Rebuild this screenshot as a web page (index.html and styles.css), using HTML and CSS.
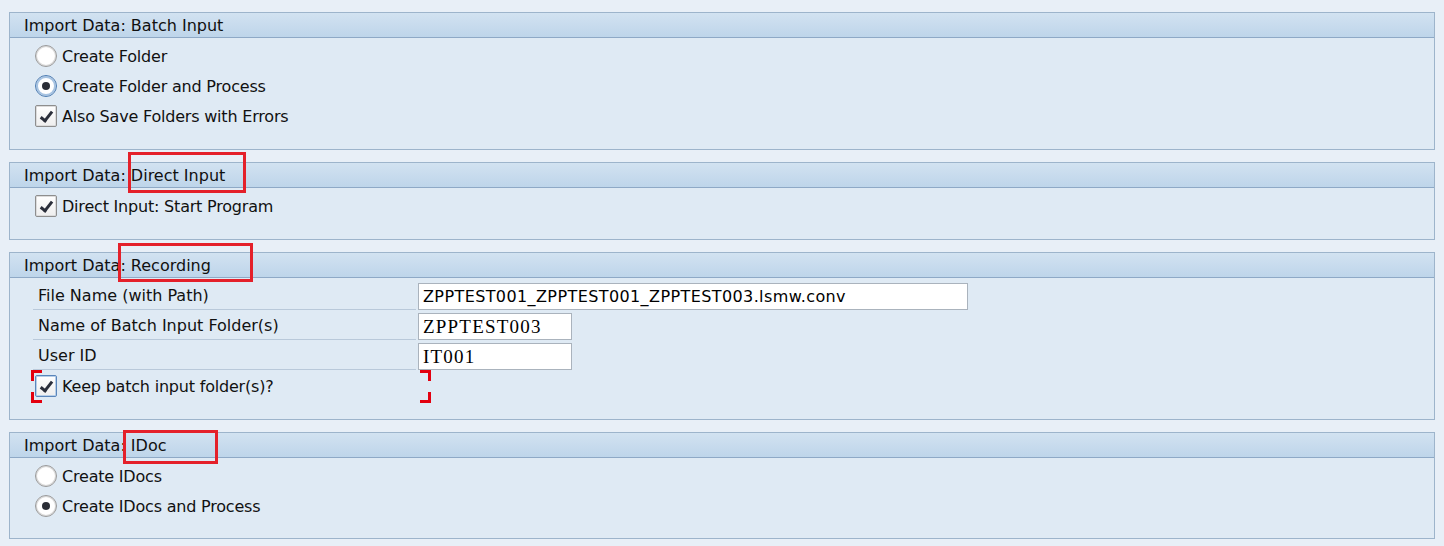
FILE: index.html
```html
<!DOCTYPE html>
<html lang="en">

<head>
    <meta charset="UTF-8">
    <title>Import Data</title>
    <link rel="stylesheet" href="styles.css">
</head>

<body>
    <div class="main">
        <div class="group">
            <div class="group-title">Import Data: Batch Input</div>
            <div class="group-body">
                <div class="row"><span class="radio"></span><span>Create Folder</span></div>
                <div class="row"><span class="radio radio-on focus"></span><span>Create Folder and Process</span></div>
                <div class="row"><span class="check"></span><span>Also Save Folders with Errors</span></div>
            </div>
        </div>

        <div class="group">
            <div class="group-title">Import Data: Direct Input</div>
            <div class="group-body">
                <div class="row"><span class="check"></span><span>Direct Input: Start Program</span></div>
            </div>
            <span class="mark mark-direct"></span>
        </div>

        <div class="group">
            <div class="group-title">Import Data: Recording</div>
            <div class="group-body">
                <div class="field">
                    <label>File Name (with Path)</label>
                    <div class="input input-long">ZPPTEST001_ZPPTEST001_ZPPTEST003.lsmw.conv</div>
                </div>
                <div class="field">
                    <label>Name of Batch Input Folder(s)</label>
                    <div class="input input-short serif">ZPPTEST003</div>
                </div>
                <div class="field">
                    <label>User ID</label>
                    <div class="input input-short serif">IT001</div>
                </div>
                <div class="row">
                    <span class="check focus"></span><span>Keep batch input folder(s)?</span>
                    <span class="corner corner-tl"></span>
                    <span class="corner corner-bl"></span>
                    <span class="corner corner-tr"></span>
                    <span class="corner corner-br"></span>
                </div>
            </div>
            <span class="mark mark-recording"></span>
        </div>

        <div class="group">
            <div class="group-title">Import Data: IDoc</div>
            <div class="group-body">
                <div class="row"><span class="radio"></span><span>Create IDocs</span></div>
                <div class="row"><span class="radio radio-on"></span><span>Create IDocs and Process</span></div>
            </div>
            <span class="mark mark-idoc"></span>
        </div>
    </div>
</body>

</html>
```

FILE: styles.css
```css
body {
    margin: 0;
    background-color: #e8eff7;
    font-family: 'DejaVu Sans', Verdana, sans-serif;
    font-size: 16px;
    color: #111;
}
.main {
    padding: 12px 9px 8px 9px;
}
.group {
    position: relative;
    border: 1px solid #9db4cb;
    background-color: #dfeaf4;
    margin-bottom: 12px;
}
.group-title {
    height: 24px;
    line-height: 25px;
    padding-left: 14px;
    background: linear-gradient(#d2e2f1, #bed5ea);
    border-bottom: 1px solid #8ea9c6;
    color: #101010;
}
.group-body {
    padding: 3px 0 18px 25px;
}
.group:last-child .group-body {
    padding-bottom: 17px;
}
.row {
    position: relative;
    height: 30px;
    display: flex;
    align-items: center;
}
.row span:nth-child(2) {
    margin-left: 5px;
    letter-spacing: -0.2px;
}

/* radio buttons */
.radio {
    position: relative;
    width: 20px;
    height: 20px;
    border-radius: 50%;
    border: 1px solid #9a9a9a;
    background: radial-gradient(circle, #ffffff 55%, #e6e6e6 100%);
    box-shadow: inset 0 0 0 1px #d6d6d6;
}
.radio-on::after {
    content: '';
    position: absolute;
    left: 6px;
    top: 6px;
    width: 8px;
    height: 8px;
    border-radius: 50%;
    background-color: #2a2d36;
}
.radio.focus {
    border-color: #4d7db3;
    box-shadow: inset 0 0 0 2px #a6c3e2;
}

/* check boxes */
.check {
    position: relative;
    width: 20px;
    height: 20px;
    border: 1px solid #8e8e8e;
    border-radius: 2px;
    background: linear-gradient(#ffffff, #eeeeee);
    box-shadow: inset 0 0 0 1px #dcdcdc;
}
.check::after {
    content: '';
    position: absolute;
    left: 7px;
    top: 3px;
    width: 4px;
    height: 10px;
    border-right: 3px solid #2b2f3b;
    border-bottom: 3px solid #2b2f3b;
    transform: rotate(38deg);
}
.check.focus {
    border-color: #5b86bb;
    box-shadow: inset 0 0 0 1px #b8cfe8;
}

/* form fields */
.field {
    height: 30px;
    display: flex;
    align-items: flex-start;
    padding-top: 2px;
    box-sizing: border-box;
}
.field label {
    width: 383px;
    height: 27px;
    line-height: 26px;
    padding-left: 5px;
    margin-left: -2px;
    box-sizing: border-box;
    border-bottom: 1px solid #b9c9da;
}
.input {
    height: 27px;
    line-height: 25px;
    box-sizing: border-box;
    border: 1px solid #aab3bd;
    background-color: #fff;
    padding-left: 4px;
    margin-left: 2px;
    color: #000;
}
.input-long {
    width: 550px;
    font-size: 16px;
    letter-spacing: 0.4px;
}
.input-short {
    width: 154px;
}
.serif {
    font-family: 'Liberation Serif', 'Times New Roman', serif;
    font-size: 19px;
    letter-spacing: 1.2px;
}

/* red annotations */
.mark {
    position: absolute;
    border: 3px solid #e4202a;
    box-sizing: border-box;
}
.mark-direct {
    left: 118px;
    top: -11px;
    width: 118px;
    height: 41px;
}
.mark-recording {
    left: 108px;
    top: -10px;
    width: 135px;
    height: 39px;
}
.mark-idoc {
    left: 113px;
    top: -3px;
    width: 95px;
    height: 34px;
}
.corner {
    position: absolute;
    width: 11px;
    height: 11px;
    box-sizing: border-box;
    border: 0 solid #e3000f;
}
.corner-tl {
    left: -4px;
    top: -1px;
    border-width: 3px 0 0 3px;
}
.corner-bl {
    left: -4px;
    bottom: -2px;
    border-width: 0 0 3px 3px;
}
.corner-tr {
    left: 385px;
    top: -1px;
    border-width: 3px 3px 0 0;
}
.corner-br {
    left: 385px;
    bottom: -2px;
    border-width: 0 3px 3px 0;
}
```
